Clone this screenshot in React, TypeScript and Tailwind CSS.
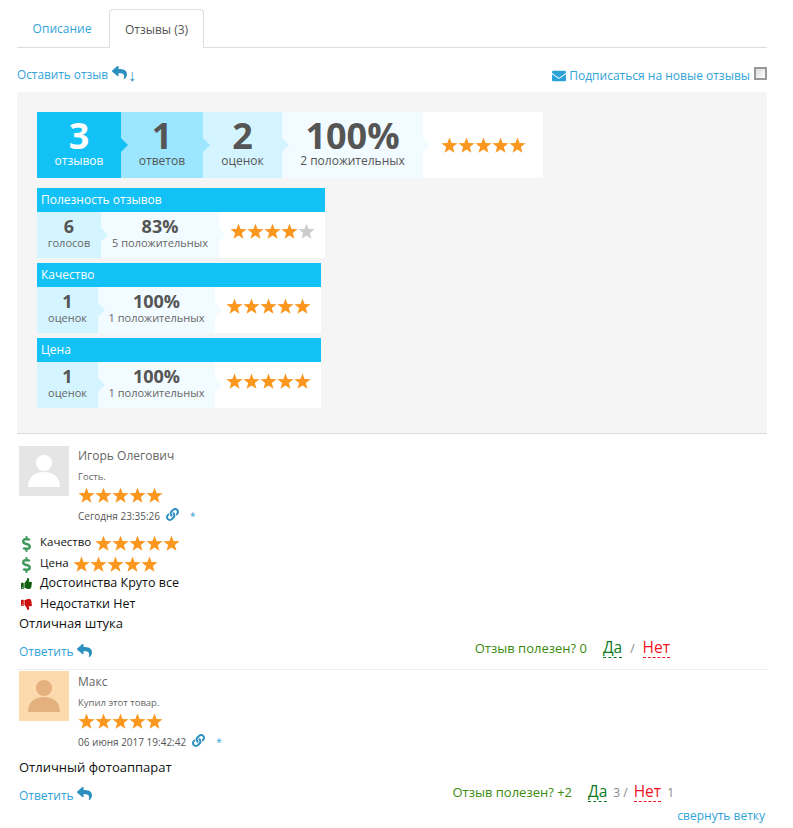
import React from 'react';
import { FaReply, FaEnvelope, FaLink, FaThumbsUp, FaThumbsDown, FaDollarSign } from 'react-icons/fa';

const STAR = 'M12 .6l2.880 8.040 8.530.25-6.750 5.220 2.390 8.200L12 17.500l-7.050 4.810 2.390-8.200L.59 8.890l8.530-.25z';

const Stars = ({ filled = 5 }: { filled?: number }) => (
  <span className="inline-flex">
    {[0, 1, 2, 3, 4].map((i) => (
      <svg key={i} viewBox="0 0 24 24" className={`h-[17px] w-[17px] ${i < filled ? 'fill-[#fb971f]' : 'fill-[#cccccc]'}`}>
        <path d={STAR} />
      </svg>
    ))}
  </span>
);

// small triangle pointing into the next segment
const Notch = ({ className }: { className: string }) => (
  <span className={`absolute left-full top-1/2 z-10 h-0 w-0 -translate-y-1/2 border-y-[7px] border-l-[7px] border-y-transparent ${className}`} />
);

const Segment = ({
  className,
  notch,
  children,
}: {
  className: string;
  notch?: string;
  children: React.ReactNode;
}) => (
  <div className={`relative flex flex-col items-center justify-center ${className}`}>
    {children}
    {notch && <Notch className={notch} />}
  </div>
);

const SubBlock = ({
  title,
  count,
  countLabel,
  percent,
  positive,
  filled,
  wide,
}: {
  title: string;
  count: number;
  countLabel: string;
  percent: string;
  positive: string;
  filled: number;
  wide?: boolean;
}) => (
  <div className={wide ? 'w-[288px]' : 'w-[284px]'}>
    <div className="flex h-6 items-center bg-[#12c1f5] px-1 text-xs text-white">{title}</div>
    <div className="flex h-[46px]">
      <Segment className={`bg-[#d4f5ff] pb-0.5 ${wide ? 'w-16' : 'w-[61px]'}`} notch="border-l-[#d4f5ff]">
        <span className="text-lg/[17px] font-bold text-[#555555]">{count}</span>
        <span className="text-[11px]/[15px] text-[#666666]">{countLabel}</span>
      </Segment>
      <Segment className={`bg-[#f2fbff] pb-0.5 ${wide ? 'w-[118px]' : 'w-[117px]'}`} notch="border-l-[#f2fbff]">
        <span className="text-lg/[17px] font-bold text-[#555555]">{percent}</span>
        <span className="text-[11px]/[15px] text-[#666666]">{positive}</span>
      </Segment>
      <div className="flex flex-1 items-center justify-center bg-white pb-2">
        <Stars filled={filled} />
      </div>
    </div>
  </div>
);

const Avatar = ({ bg, fg }: { bg: string; fg: string }) => (
  <svg viewBox="0 0 50 50" className={`h-[50px] w-[50px] shrink-0 ${bg} ${fg}`}>
    <circle cx="25" cy="17" r="8" fill="currentColor" />
    <path d="M9 41c0-10 7-15 16-15s16 5 16 15z" fill="currentColor" />
  </svg>
);

const ReplyLink = () => (
  <a className="flex items-center gap-[3px] pt-1 text-xs text-[#2fa3d8]">
    Ответить <FaReply className="mb-1 h-[15px] w-[15px] text-[#2b8fc0]" />
  </a>
);

const Useful = ({ score, yes, no, className }: { score: string; yes?: number; no?: number; className: string }) => (
  <div className={`flex items-baseline ${className}`}>
    <span className="text-[13px] text-[#3a8a0c]">Отзыв полезен? {score}</span>
    <span className="ml-4 border-b border-dashed border-[#0a7a1a] text-[15.500px]/[19px] text-[#0a7a1a]">Да</span>
    {yes !== undefined ? (
      <span className="ml-[6px] mr-[6px] text-xs text-[#888888]">{yes} /</span>
    ) : (
      <span className="mx-2 text-xs text-[#888888]">/</span>
    )}
    <span className="border-b border-dashed border-[#ee1122] text-[15.500px]/[19px] text-[#ee1122]">Нет</span>
    {no !== undefined && <span className="ml-[6px] text-xs text-[#888888]">{no}</span>}
  </div>
);

const ReviewHead = ({
  avatar,
  name,
  status,
  date,
  className,
}: {
  avatar: React.ReactNode;
  name: string;
  status: string;
  date: string;
  className?: string;
}) => (
  <div className="flex gap-[9px] pl-0.5">
    {avatar}
    <div className={`flex flex-col ${className ?? ''}`}>
      <span className="text-xs/[20px] text-[#666666]">{name}</span>
      <span className="mt-1 text-[9.500px]/[14px] text-[#666666]">{status}</span>
      <span className="mt-[3px] flex h-[17px] items-center"><Stars /></span>
      <div className="mt-[5px] flex h-3.5 items-center text-[10px] text-[#555555]">
        {date}
        <FaLink className="mb-[3px] ml-[6px] h-[13px] w-[13px] text-[#2b8fc0]" />
        <span className="ml-[11px] text-[#2fa3d8]">*</span>
      </div>
    </div>
  </div>
);

const Row = ({ icon, className, children }: { icon: React.ReactNode; className?: string; children: React.ReactNode }) => (
  <div className={`flex h-[21px] items-center text-[#111111] ${className ?? ''}`}>
    <span className="ml-[3px] mr-[7px] flex w-[13px] justify-center">{icon}</span>
    {children}
  </div>
);

export default function App() {
  return (
    <div className="min-h-[828px] bg-white font-['Open_Sans',sans-serif]">
      <div className="mx-[17px] w-[750px] pt-[9px]">
        <div className="flex h-[39px] border-b border-[#dddddd]">
          <a className="flex w-[92px] items-center justify-center pr-0.5 pt-0.5 text-xs text-[#2fa3d8]">Описание</a>
          <a className="-mb-px flex h-[39px] w-[95px] items-center justify-center rounded-t border border-b-white border-[#dddddd] bg-white pt-0.5 text-xs text-[#555555]">
            Отзывы (3)
          </a>
        </div>

        <div className="flex h-[44px] items-center justify-between pt-[9px]">
          <a className="flex items-center text-[11.800px] text-[#2fa3d8]">
            Оставить отзыв <FaReply className="mb-1 ml-[4px] h-[15px] w-[15px] text-[#2b8fc0]" />
            <span className="ml-px text-base/[16px] text-[#2b8fc0]">↓</span>
          </a>
          <div className="mt-0.5 flex items-center text-xs text-[#2fa3d8]">
            <FaEnvelope className="mr-[3px] h-[14px] w-[14px] text-[#2ba3d8]" />
            Подписаться на новые отзывы
            <input
              type="checkbox"
              className="mb-1 ml-1 h-[13px] w-[13px] appearance-none border-2 border-[#999999] bg-gradient-to-br from-[#dddddd] to-white"
            />
          </div>
        </div>

        <div className="flex h-[342px] flex-col gap-[5px] border-b border-[#dddddd] bg-[#f5f5f5] px-5 pt-5">
          <div className="mb-[5px] flex h-[66px] w-[506px]">
            <Segment className="w-[84px] bg-[#12c1f5] pb-1 text-white" notch="border-l-[#12c1f5]">
              <span className="text-[36px]/[36px] font-bold">3</span>
              <span className="text-xs/[14px]">отзывов</span>
            </Segment>
            <Segment className="w-[82px] bg-[#9ce6ff] pb-1 text-[#555555]" notch="border-l-[#9ce6ff]">
              <span className="text-[36px]/[36px] font-bold">1</span>
              <span className="text-xs/[14px]">ответов</span>
            </Segment>
            <Segment className="w-[79px] bg-[#d4f5ff] pb-1 text-[#555555]" notch="border-l-[#d4f5ff]">
              <span className="text-[36px]/[36px] font-bold">2</span>
              <span className="text-xs/[14px]">оценок</span>
            </Segment>
            <Segment className="w-[141px] bg-[#f2fbff] pb-1 text-[#555555]" notch="border-l-[#f2fbff]">
              <span className="text-[36px]/[36px] font-bold">100%</span>
              <span className="text-xs/[14px]">2 положительных</span>
            </Segment>
            <div className="flex flex-1 items-center justify-center bg-white">
              <Stars />
            </div>
          </div>
          <SubBlock wide title="Полезность отзывов" count={6} countLabel="голосов" percent="83%" positive="5 положительных" filled={4} />
          <SubBlock title="Качество" count={1} countLabel="оценок" percent="100%" positive="1 положительных" filled={5} />
          <SubBlock title="Цена" count={1} countLabel="оценок" percent="100%" positive="1 положительных" filled={5} />
        </div>

        {/* first review */}
        <div className="h-[236px] border-b border-[#eeeeee] pt-3">
          <ReviewHead
            avatar={<Avatar bg="bg-[#e5e5e5]" fg="text-white" />}
            name="Игорь Олегович"
            status="Гость."
            date="Сегодня 23:35:26"
          />
          <div className="mt-2.5">
            <Row className="text-[11.500px]" icon={<FaDollarSign className="h-4 w-4 text-[#3f9a5c]" />}>
              <span className="pb-1">Качество</span> <span className="ml-1 flex"><Stars /></span>
            </Row>
            <Row className="text-[11.500px]" icon={<FaDollarSign className="h-4 w-4 text-[#3f9a5c]" />}>
              <span className="pb-1">Цена</span> <span className="ml-1 flex"><Stars /></span>
            </Row>
            <Row className="-mt-0.5 text-[12.500px]" icon={<FaThumbsUp className="h-[11px] w-[11px] text-[#0f5f0f]" />}>Достоинства Круто все</Row>
            <Row className="text-[12.500px]" icon={<FaThumbsDown className="h-[11px] w-[11px] text-[#cc0f0f]" />}>Недостатки Нет</Row>
          </div>
          <p className="-mt-0.5 ml-0.5 text-[13px]/[20px] text-[#111111]">Отличная штука</p>
          <div className="mt-[5px] flex items-center justify-between pl-0.5">
            <ReplyLink />
            <Useful score="0" className="mr-[97px] pb-1" />
          </div>
        </div>

        {/* second review */}
        <div className="pt-px">
          <ReviewHead
            avatar={<Avatar bg="bg-[#fdd9ae]" fg="text-[#e3b07e]" />}
            name="Макс"
            status="Купил этот товар."
            date="06 июня 2017 19:42:42"
            className="pt-px"
          />
          <p className="ml-0.5 mt-2 text-[13px]/[20px] text-[#111111]">Отличный фотоаппарат</p>
          <div className="mt-[5px] flex items-center justify-between pl-0.5">
            <ReplyLink />
            <Useful score="+2" yes={3} no={1} className="mr-[93px] pb-0.5" />
          </div>
          <div className="mt-0.5 pr-0.5 text-right text-xs/[18px] text-[#2fa3d8]">свернуть ветку</div>
        </div>
      </div>
    </div>
  );
}
